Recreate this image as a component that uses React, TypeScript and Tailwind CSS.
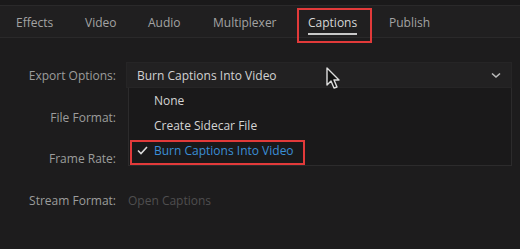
import React from "react";

const tabs: { t: string; w: number }[] = [
  { t: "Effects", w: 69 },
  { t: "Video", w: 63 },
  { t: "Audio", w: 65 },
  { t: "Multiplexer", w: 95 },
  { t: "Captions", w: 81 },
  { t: "Publish", w: 60 },
];

function Cursor() {
  return (
    <svg width="16" height="24" viewBox="0 0 16 24" className="absolute left-[326px] top-[67px]">
      <path d="M1 1 L1 18 L5 14 L8 21 L11 20 L8 13 L13 13 Z" fill="#111" stroke="#ddd" strokeWidth="1.4" strokeLinejoin="round" />
    </svg>
  );
}

export default function App() {
  return (
    <div
      className="relative w-[520px] h-[249px] overflow-hidden bg-[#1d1c1d] text-[12px]"
      style={{ fontFamily: '"Open Sans", "Noto Sans", sans-serif' }}
    >
      <div className="h-[5px] bg-[#1a191a]" />
      <div className="h-[33px] bg-[#201f20] border-t border-b border-[#2a292a] flex items-center pl-[16px] pt-[2px]">
        {tabs.map(({ t, w }) => {
          const active = t === "Captions";
          return (
            <div key={t} className="relative shrink-0" style={{ width: w }}>
              <span className={active ? "relative text-[#d6d6d6] font-medium" : "text-[#a3a3a3] font-medium"}>
                {t}
                {active && (
                  <>
                    <span className="absolute left-0 right-0 top-[19px] h-[2px] bg-[#c8c8c8]" />
                    <span className="absolute -left-[11px] -right-[15px] -top-[6px] h-[35px] border-2 border-[#e23a3a]" />
                  </>
                )}
              </span>
            </div>
          );
        })}
      </div>

      <div className="flex pt-[24px]">
        <div className="w-[116px] flex flex-col items-end text-[#9c9c9c] font-medium">
          <div className="h-[26px] flex items-center pt-[1px]">Export Options:</div>
          <div className="h-[26px] mt-[17px] flex items-center">File Format:</div>
          <div className="h-[26px] mt-[15px] flex items-center">Frame Rate:</div>
          <div className="h-[26px] mt-[16px] flex items-center">Stream Format:</div>
        </div>
        <div className="ml-[10px] w-[386px] flex flex-col">
          <div className="h-[26px] bg-[#222122] border border-[#262526] flex items-center justify-between pl-[10px] pr-[10px] pt-[1px]">
            <span className="text-[#d2d2d2] font-medium">Burn Captions Into Video</span>
            <svg width="10" height="7" viewBox="0 0 10 7">
              <path d="M1 1.5 L5 5 L9 1.5" fill="none" stroke="#bbb" strokeWidth="1.6" />
            </svg>
          </div>
          <div className="ml-[2px] h-[78px] bg-[#1a191a] border border-[#2c2b2c] border-t-0 flex flex-col">
            <div className="h-[25px] flex items-center pl-[25px] text-[#d4d4d4] font-medium">None</div>
            <div className="h-[25px] flex items-center pl-[25px] text-[#d4d4d4] font-medium">Create Sidecar File</div>
            <div className="relative h-[25px] flex items-center pl-[8px] font-medium">
              <svg width="11" height="9" viewBox="0 0 11 9" className="mr-[6px]">
                <path d="M1 4.5 L4 7.5 L10 1" fill="none" stroke="#d8d8d8" strokeWidth="1.6" />
              </svg>
              <span className="text-[#3a8ed6]">Burn Captions Into Video</span>
              <div className="absolute left-[1px] top-[2px] w-[175px] h-[25px] border-2 border-[#e23a3a]" />
            </div>
          </div>
          <div className="h-[26px] mt-[22px] pl-[2px] flex items-center text-[#4f4e4f] font-medium">Open Captions</div>
        </div>
      </div>
      <Cursor />
    </div>
  );
}
